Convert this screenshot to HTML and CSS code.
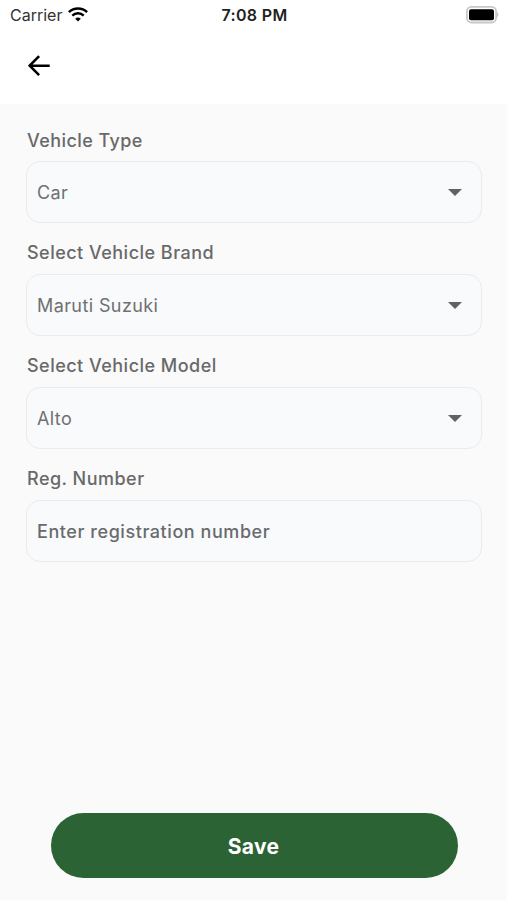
FILE: index.html
```html
<!DOCTYPE html>
<html lang="en">
<head>
<meta charset="utf-8">
<title>Vehicle</title>
<link rel="stylesheet" href="styles.css">
</head>
<body>
<header class="top">
  <div class="status">
    <div class="carrier"><span>Carrier</span>
      <svg class="wifi" width="20" height="15" viewBox="0 0 20 15"><g fill="none" stroke="#000" stroke-width="2.5"><path d="M.9 5.1a13.2 13.2 0 0 1 18.2 0"/><path d="M4.3 8.6a8.3 8.3 0 0 1 11.4 0"/></g><path d="M7.2 11.7a4.5 4.5 0 0 1 5.6 0L10 14.6z"/></svg>
    </div>
    <time class="clock">7:08 PM</time>
    <svg class="battery" width="33" height="18" viewBox="0 0 33 18"><rect x=".9" y=".9" width="29.2" height="15.6" rx="4.5" fill="none" stroke="#c8c8c8" stroke-width="1.8"/><rect x="3" y="3.2" width="25" height="11" rx="2"/><path d="M31 6q3 2.7 0 5.4z" fill="#c8c8c8"/></svg>
  </div>
  <button class="back" aria-label="Back"><svg width="22" height="22" viewBox="0 0 22 22"><path d="M21.7 10.7H2M11.1 1.2 1.7 10.7l9.4 9.5" fill="none" stroke="#000" stroke-width="2.6"/></svg></button>
</header>
<main class="form">
  <label class="label">Vehicle Type</label>
  <div class="field"><span>Car</span><i class="caret"></i></div>
  <label class="label">Select Vehicle Brand</label>
  <div class="field"><span>Maruti Suzuki</span><i class="caret"></i></div>
  <label class="label">Select Vehicle Model</label>
  <div class="field"><span>Alto</span><i class="caret"></i></div>
  <label class="label">Reg. Number</label>
  <div class="field entry"><span>Enter registration number</span></div>
  <button class="save">Save</button>
</main>
</body>
</html>
```

FILE: styles.css
```css
* { box-sizing: border-box; }
body { margin: 0; height: 900px; display: flex; flex-direction: column; background: #fafafa; font-family: Inter, sans-serif; overflow: hidden; }
button { border: 0; padding: 0; font-family: inherit; }
.top { height: 104px; background: #fff; }
.status { height: 29px; padding: 0 8px 0 10px; display: grid; grid-template-columns: 1fr auto 1fr; align-items: center; font-size: 16px; line-height: 20px; color: #222; }
.carrier { display: flex; align-items: center; gap: 6px; }
.carrier span { color: #333; }
.clock { font-weight: 600; letter-spacing: .35px; }
.battery { justify-self: end; }
.back { display: block; margin: 26px 0 0 28px; width: 22px; height: 22px; background: none; }
.back svg { display: block; }
.form { flex: 1; display: flex; flex-direction: column; padding: 23px 25px 22px 26px; }
.label { height: 26px; margin: 0 0 8px 1px; font-size: 18px; line-height: 26px; font-weight: 500; letter-spacing: .48px; color: #696969; }
.label:first-child { line-height: 27px; letter-spacing: .42px; }
.field { height: 62px; margin-bottom: 17px; padding: 0 19px 0 10px; border: 1px solid #e9ebec; border-radius: 14px; background: #f8fafc; display: flex; align-items: center; justify-content: space-between; font-size: 18px; letter-spacing: .4px; color: #707070; }
.entry { font-weight: 500; letter-spacing: .56px; color: #696b6d; }
.caret { border: 7px solid transparent; border-top-color: #626262; border-bottom: 0; }
.save { margin: auto 24px 0 25px; height: 65px; padding: 1px 2px 0 0; border-radius: 33px; background: #2b6335; color: #fff; font-size: 21px; font-weight: 700; letter-spacing: .3px; }
```
